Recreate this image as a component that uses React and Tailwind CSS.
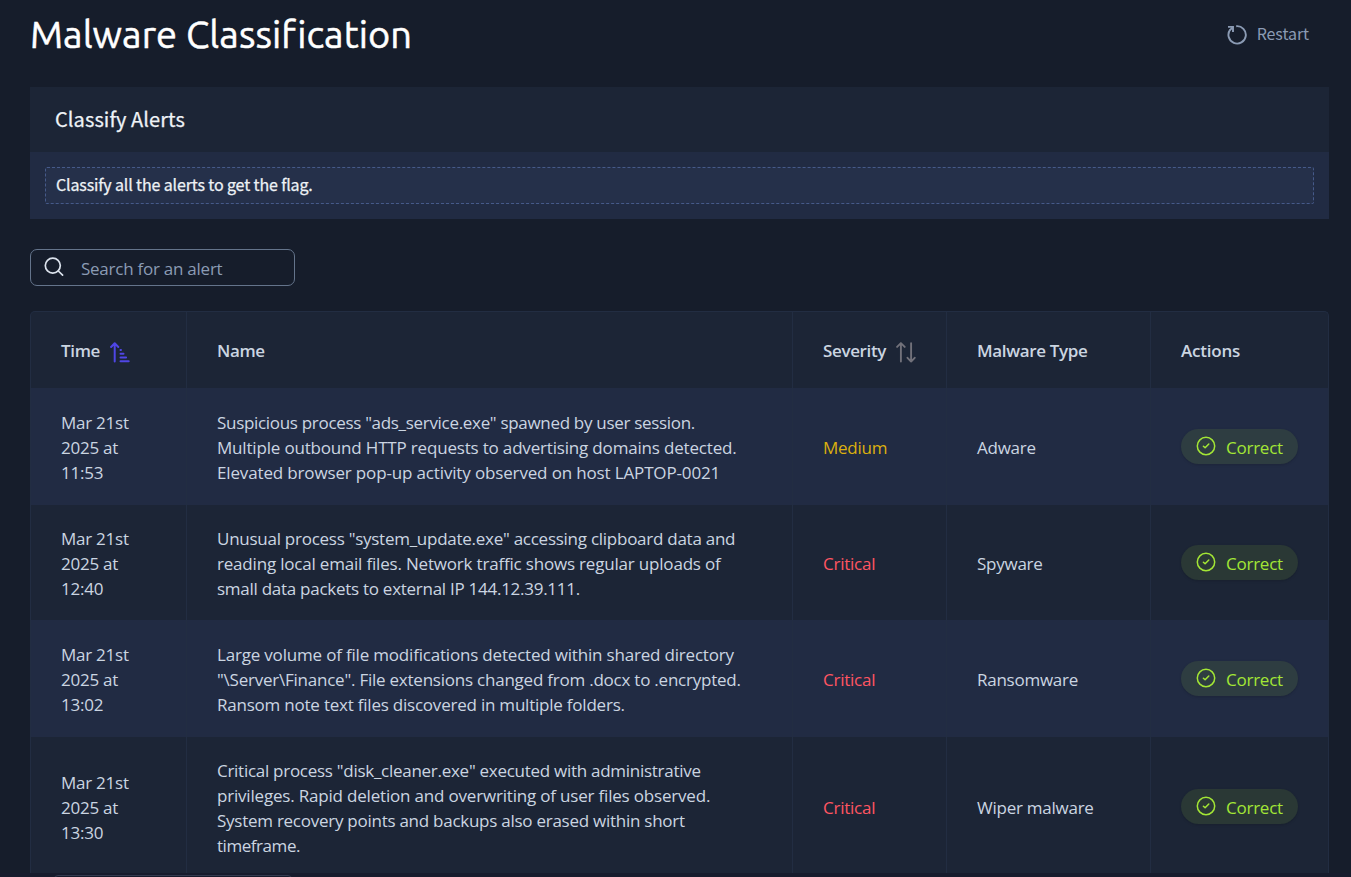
import React from "react";

const columns = "grid grid-cols-[156px_606px_154px_204px_177px]";

const rows = [
  {
    time: "11:53",
    name: [
      ['Suspicious process "ads_service.exe" spawned by user session.', "tracking-[-0.31px]"],
      ["Multiple outbound HTTP requests to advertising domains detected.", "tracking-[-0.18px]"],
      ["Elevated browser pop-up activity observed on host LAPTOP-0021", "tracking-[-0.15px]"],
    ],
    severity: "Medium",
    type: "Adware",
    height: "h-[117px]",
  },
  {
    time: "12:40",
    name: [
      ['Unusual process "system_update.exe" accessing clipboard data and', "tracking-[-0.26px]"],
      ["reading local email files. Network traffic shows regular uploads of", "tracking-[-0.19px]"],
      ["small data packets to external IP 144.12.39.111.", "tracking-[-0.27px]"],
    ],
    severity: "Critical",
    type: "Spyware",
    height: "h-[115px]",
  },
  {
    time: "13:02",
    name: [
      ["Large volume of file modifications detected within shared directory", "tracking-[-0.19px]"],
      ['"\\Server\\Finance". File extensions changed from .docx to .encrypted.', "tracking-[-0.23px]"],
      ["Ransom note text files discovered in multiple folders.", "tracking-[-0.22px]"],
    ],
    severity: "Critical",
    type: "Ransomware",
    height: "h-[117px]",
  },
  {
    time: "13:30",
    name: [
      ['Critical process "disk_cleaner.exe" executed with administrative', "tracking-[-0.275px]"],
      ["privileges. Rapid deletion and overwriting of user files observed.", "tracking-[-0.19px]"],
      ["System recovery points and backups also erased within short", "tracking-[-0.26px]"],
      ["timeframe.", "tracking-[-0.45px]"],
    ],
    severity: "Critical",
    type: "Wiper malware",
    height: "h-[139px]",
  },
];

function RestartIcon() {
  return (
    <svg width="20" height="20" viewBox="0 0 20 20" fill="none" stroke="#8b9bb4" strokeWidth="1.9" className="shrink-0">
      <path d="M9.2 1.2A8.7 8.7 0 1 1 3.2 4.6" />
      <path d="M1 1.9h5v5" />
      <path d="M6 1.9 3 5.2" />
    </svg>
  );
}

function SearchIcon() {
  return (
    <svg width="20" height="20" viewBox="0 0 20 20" fill="none" stroke="#dbe2ec" strokeWidth="1.7" strokeLinecap="round" className="shrink-0 -mt-[2px]">
      <circle cx="8.8" cy="8.6" r="7.5" />
      <path d="m14.3 14 4.3 4.2" />
    </svg>
  );
}

function SortUpIcon() {
  return (
    <svg width="20" height="21" viewBox="0 0 20 21" fill="none" stroke="#4f46e5" strokeWidth="2" strokeLinecap="round" className="shrink-0">
      <path d="M4.7 1.4v18.2M1.1 5l3.6-3.7L8.3 5" strokeLinejoin="round" />
      <path d="M10.5 8h.5M10.5 11.7h3M10.5 15.6h5.6M10.5 19.2h8.2" />
    </svg>
  );
}

function SortIcon() {
  return (
    <svg width="20" height="21" viewBox="0 0 20 21" fill="none" stroke="#71717a" strokeWidth="1.9" strokeLinecap="round" strokeLinejoin="round" className="shrink-0">
      <path d="M4.9 1.2v18.4M1.1 4.9l3.8-3.8 3.8 3.8" />
      <path d="M15.1 1.2v18.4M11.5 15.8l3.6 3.8 3.6-3.8" />
    </svg>
  );
}

function CheckIcon() {
  return (
    <svg width="20" height="20" viewBox="0 0 20 20" fill="none" stroke="#a3e635" strokeWidth="1.5" strokeLinecap="round" strokeLinejoin="round" className="shrink-0 -mt-[2px]">
      <circle cx="10" cy="10" r="8.7" />
      <path d="m7.4 10.2 1.7 1.6L12.8 8" />
    </svg>
  );
}

const cell = "border-r border-[#222d42] flex items-center pl-[30px] pt-[2px]";
const head = "border-r border-[#222d42] flex items-center pl-[30px] pt-px tracking-[-0.35px]";

export default function App() {
  return (
    <div className="h-[877px] w-[1351px] overflow-hidden bg-[#161d2b] flex flex-col font-['Open_Sans','Noto_Sans',sans-serif] text-[17px] leading-[25px] tracking-[-0.25px] text-[#cbd5e1]">
      <header className="h-[87px] shrink-0 flex justify-between pl-[30px] pr-[42px]">
        <h1 className="font-[Ubuntu,'Noto_Sans',sans-serif] text-[38px] leading-[68px] tracking-[0.05px] text-white whitespace-nowrap [-webkit-text-stroke:0.5px_white]">
          Malware Classification
        </h1>
        <button className="h-[69px] flex items-center gap-[10px] font-['Noto_Sans_CJK_JP',sans-serif] text-[16px] tracking-[-0.08px] text-[#8b9bb4]">
          <RestartIcon />
          <span className="pb-[2px]">Restart</span>
        </button>
      </header>

      <section className="h-[132px] w-[1299px] ml-[30px] shrink-0 flex flex-col font-['Noto_Sans_CJK_JP',sans-serif] tracking-normal [-webkit-text-stroke:0.25px_#eef2f6]">
        <h2 className="h-[65px] pl-[25px] leading-[64px] bg-[#1c2536] text-[20px] tracking-[0.08px] text-[#eef2f6]">
          <span>Classify Alerts</span>
        </h2>
        <div className="h-[67px] p-[15px] bg-[#212b43]">
          <p className="h-[37px] rounded-[2px] border border-dashed border-[#465a8a] bg-[#25304a] pl-[10px] text-[16px] tracking-[-0.14px] leading-[33px] text-[#eef2f6]">
            <span>Classify all the alerts to get the flag.</span>
          </p>
        </div>
      </section>

      <div className="mt-[30px] ml-[30px] h-[37px] w-[265px] shrink-0 flex items-center rounded-[7px] border border-[#64748b] pl-[13px] gap-[17px] text-[#8b9bb4]">
        <SearchIcon />
        <span className="pt-px">Search for an alert</span>
      </div>

      <div className="mt-[25px] ml-[30px] w-[1299px] h-[562px] shrink-0 overflow-hidden rounded-t-[5px] border border-b-0 border-[#222d42] bg-[#1c2536]">
        <div className={`${columns} h-[76px] font-semibold`}>
          <div className={`${head} gap-[10px]`}>
            <span>Time</span>
            <span className="pt-[4px]"><SortUpIcon /></span>
          </div>
          <div className={head}><span>Name</span></div>
          <div className={`${head} gap-[10px]`}>
            <span>Severity</span>
            <span className="pt-[4px]"><SortIcon /></span>
          </div>
          <div className={head}><span>Malware Type</span></div>
          <div className="flex items-center pl-[30px] pt-px tracking-[-0.2px]"><span>Actions</span></div>
        </div>
        {rows.map((row, i) => (
          <div key={row.time} className={`${columns} ${row.height} ${i % 2 === 0 ? "bg-[#212b43]" : "bg-[#1c2536]"}`}>
            <div className={cell}>
              <div className="whitespace-nowrap">
                <div>Mar 21st</div>
                <div>2025 at</div>
                <div>{row.time}</div>
              </div>
            </div>
            <div className={cell}>
              <div className="whitespace-nowrap">
                {row.name.map(([line, tracking]) => (
                  <div key={line}><span className={tracking}>{line}</span></div>
                ))}
              </div>
            </div>
            <div className={`${cell} ${row.severity === "Medium" ? "text-[#dcb00e]" : "text-[#ff5562]"}`}>
              <span>{row.severity}</span>
            </div>
            <div className={cell}><span>{row.type}</span></div>
            <div className="flex items-center pl-[30px]">
              <div className="h-[35px] w-[117px] flex items-center gap-[10px] rounded-full bg-[#a3e635]/10 pl-[15px] shadow text-[#a3e635]">
                <CheckIcon />
                <span className="pt-[2px]">Correct</span>
              </div>
            </div>
          </div>
        ))}
      </div>
      <footer className="h-[4px] shrink-0 bg-[#171c2d] pt-[2px] pl-[54px]">
        <div className="h-[10px] w-[238px] rounded-t-[4px] border border-[#343b50]" />
      </footer>
    </div>
  );
}
